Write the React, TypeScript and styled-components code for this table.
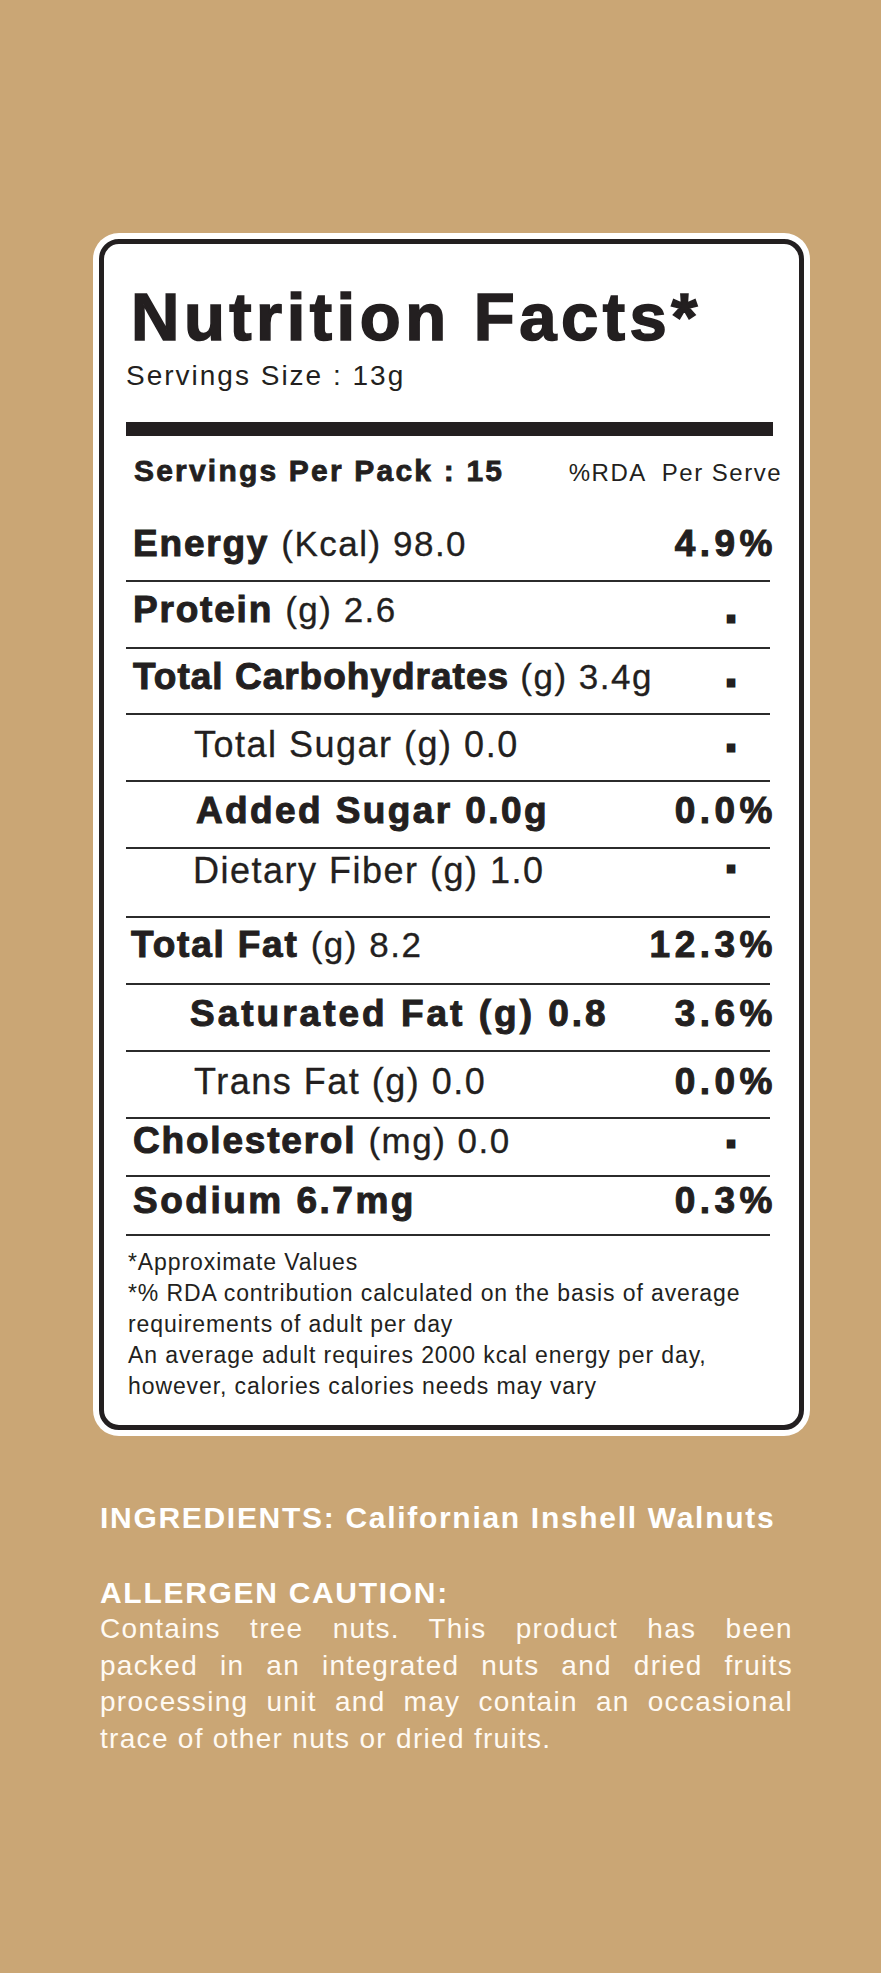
import React from 'react';
import styled, { createGlobalStyle } from 'styled-components';

const ink = '#231f20';
const tan = '#caa675';

const GlobalStyle = createGlobalStyle`
  html, body {
    margin: 0;
    padding: 0;
    background: ${tan};
  }
  body {
    font-family: "Liberation Sans", Arial, Helvetica, sans-serif;
  }
`;

const Page = styled.div`
  width: 881px;
  min-height: 1973px;
  box-sizing: border-box;
  padding: 233px 0 0 93px;
  background: ${tan};
`;

const Card = styled.div`
  width: 717px;
  box-sizing: border-box;
  padding: 6px;
  background: #fff;
  border-radius: 26px;
`;

const Panel = styled.div`
  border: 5px solid ${ink};
  border-radius: 20px;
  padding: 39px 26px 23px 22px;
  color: ${ink};
`;

const Title = styled.h1`
  margin: 0;
  padding-left: 5px;
  font-size: 67px;
  line-height: 67px;
  font-weight: 700;
  letter-spacing: 4.5px;
  -webkit-text-stroke: 1.6px ${ink};
  white-space: nowrap;
`;

const ServingSize = styled.div`
  margin-top: 12px;
  font-size: 28px;
  line-height: 28px;
  letter-spacing: 2px;
`;

const Bar = styled.div`
  margin-top: 32px;
  height: 14px;
  background: ${ink};
`;

const HeaderRow = styled.div`
  display: flex;
  align-items: baseline;
  justify-content: space-between;
  box-sizing: border-box;
  height: 60px;
  padding-top: 20px;
`;

const HeaderLabel = styled.div`
  padding-left: 8px;
  font-size: 30px;
  line-height: 1;
  font-weight: 700;
  letter-spacing: 2.2px;
  -webkit-text-stroke: 0.8px ${ink};
  white-space: nowrap;
`;

const HeaderRda = styled.div`
  margin-right: -9px;
  font-size: 24px;
  line-height: 1;
  letter-spacing: 1.5px;
  white-space: pre;
`;

const Table = styled.div`
  margin-right: 3px;
`;

const Row = styled.div<{ $h: number; $pt: number }>`
  display: flex;
  align-items: baseline;
  justify-content: space-between;
  box-sizing: border-box;
  height: ${p => p.$h}px;
  padding-top: ${p => p.$pt}px;
  border-bottom: 2px solid #2b2b2b;
`;

const Label = styled.div<{ $indent?: number; $track?: number }>`
  padding-left: ${p => p.$indent ?? 7}px;
  font-size: 37px;
  line-height: 1;
  font-weight: 700;
  letter-spacing: ${p => p.$track ?? 1.8}px;
  -webkit-text-stroke: 1px ${ink};
  white-space: nowrap;
`;

const Light = styled.span<{ $size?: number }>`
  font-size: ${p => p.$size ?? 35}px;
  font-weight: 400;
  letter-spacing: 1.5px;
  -webkit-text-stroke: 0.3px ${ink};
`;

const Value = styled.div<{ $center?: boolean }>`
  flex-shrink: 0;
  min-width: 92px;
  margin-right: -7px;
  text-align: ${p => (p.$center ? 'center' : 'right')};
  font-size: 37px;
  line-height: 1;
  font-weight: 700;
  letter-spacing: 4.5px;
  -webkit-text-stroke: 1px ${ink};
  white-space: nowrap;
`;

const Dot = styled.span<{ $raise?: number }>`
  font-size: 40px;
  line-height: 0;
  letter-spacing: 0;
  -webkit-text-stroke: 3px ${ink};
  vertical-align: ${p => p.$raise ?? 0}px;
`;

const Notes = styled.div`
  margin-top: 11px;
  padding-left: 2px;
`;

const Note = styled.p`
  margin: 0;
  font-size: 23px;
  line-height: 31px;
  letter-spacing: 0.9px;
`;

const Info = styled.section`
  width: 693px;
  padding-left: 7px;
  color: #fff;
`;

const InfoHeading = styled.div<{ $gap: number }>`
  margin-top: ${p => p.$gap}px;
  font-size: 30px;
  line-height: 30px;
  font-weight: 700;
  letter-spacing: 1.7px;
  white-space: nowrap;
`;

const InfoText = styled.div`
  margin-top: 3px;
  font-size: 28px;
  line-height: 36.7px;
  letter-spacing: 1.3px;
  color: #fffaf3;
`;

const InfoLine = styled.span<{ $last?: boolean }>`
  display: block;
  white-space: nowrap;
  text-align: ${p => (p.$last ? 'left' : 'justify')};
  text-align-last: ${p => (p.$last ? 'left' : 'justify')};
`;

type Nutrient = {
  key: string;
  h: number;
  pt: number;
  label: React.ReactNode;
  indent?: number;
  track?: number;
  value?: string;
  raise?: number;
};

const nutrients: Nutrient[] = [
  { key: 'energy', h: 86, pt: 29, label: <>Energy <Light>(Kcal) 98.0</Light></>, value: '4.9%' },
  { key: 'protein', h: 67, pt: 9, label: <>Protein <Light>(g) 2.6</Light></>, raise: 0 },
  { key: 'carbs', h: 66, pt: 9, track: 1, label: <>Total Carbohydrates <Light>(g) 3.4g</Light></>, raise: 3 },
  { key: 'sugar', h: 67, pt: 11, indent: 68, label: <Light $size={36}>Total Sugar (g) 0.0</Light>, raise: 6 },
  { key: 'added', h: 67, pt: 10, indent: 70, track: 2.4, label: 'Added Sugar 0.0g', value: '0.0%' },
  { key: 'fiber', h: 69, pt: 3, indent: 67, label: <Light $size={36}>Dietary Fiber (g) 1.0</Light>, raise: 11 },
  { key: 'fat', h: 67, pt: 8, indent: 5, label: <>Total Fat <Light>(g) 8.2</Light></>, value: '12.3%' },
  { key: 'sat', h: 67, pt: 10, indent: 64, track: 3, label: 'Saturated Fat (g) 0.8', value: '3.6%' },
  { key: 'trans', h: 67, pt: 11, indent: 68, label: <Light $size={36}>Trans Fat (g) 0.0</Light>, value: '0.0%' },
  { key: 'chol', h: 58, pt: 3, label: <>Cholesterol <Light>(mg) 0.0</Light></>, raise: 6 },
  { key: 'sodium', h: 59, pt: 5, track: 2.5, label: 'Sodium 6.7mg', value: '0.3%' },
];

const App: React.FC = () => {
  return (
    <Page>
      <GlobalStyle />
      <Card>
        <Panel>
          <Title>Nutrition Facts*</Title>
          <ServingSize>Servings Size : 13g</ServingSize>
          <Bar />
          <HeaderRow>
            <HeaderLabel>Servings Per Pack : 15</HeaderLabel>
            <HeaderRda>{'%RDA  Per Serve'}</HeaderRda>
          </HeaderRow>
          <Table>
            {nutrients.map(n => (
              <Row key={n.key} $h={n.h} $pt={n.pt}>
                <Label $indent={n.indent} $track={n.track}>
                  {n.label}
                </Label>
                {n.value ? (
                  <Value>{n.value}</Value>
                ) : (
                  <Value $center>
                    <Dot $raise={n.raise}>.</Dot>
                  </Value>
                )}
              </Row>
            ))}
          </Table>
          <Notes>
            <Note>*Approximate Values</Note>
            <Note>*% RDA contribution calculated on the basis of average requirements of adult per day</Note>
            <Note>An average adult requires 2000 kcal energy per day, however, calories calories needs may vary</Note>
          </Notes>
        </Panel>
      </Card>
      <Info>
        <InfoHeading $gap={67}>INGREDIENTS: Californian Inshell Walnuts</InfoHeading>
        <InfoHeading $gap={45}>ALLERGEN CAUTION:</InfoHeading>
        <InfoText>
          <InfoLine>Contains tree nuts. This product has been</InfoLine>
          <InfoLine>packed in an integrated nuts and dried fruits</InfoLine>
          <InfoLine>processing unit and may contain an occasional</InfoLine>
          <InfoLine $last>trace of other nuts or dried fruits.</InfoLine>
        </InfoText>
      </Info>
    </Page>
  );
};

export default App;
